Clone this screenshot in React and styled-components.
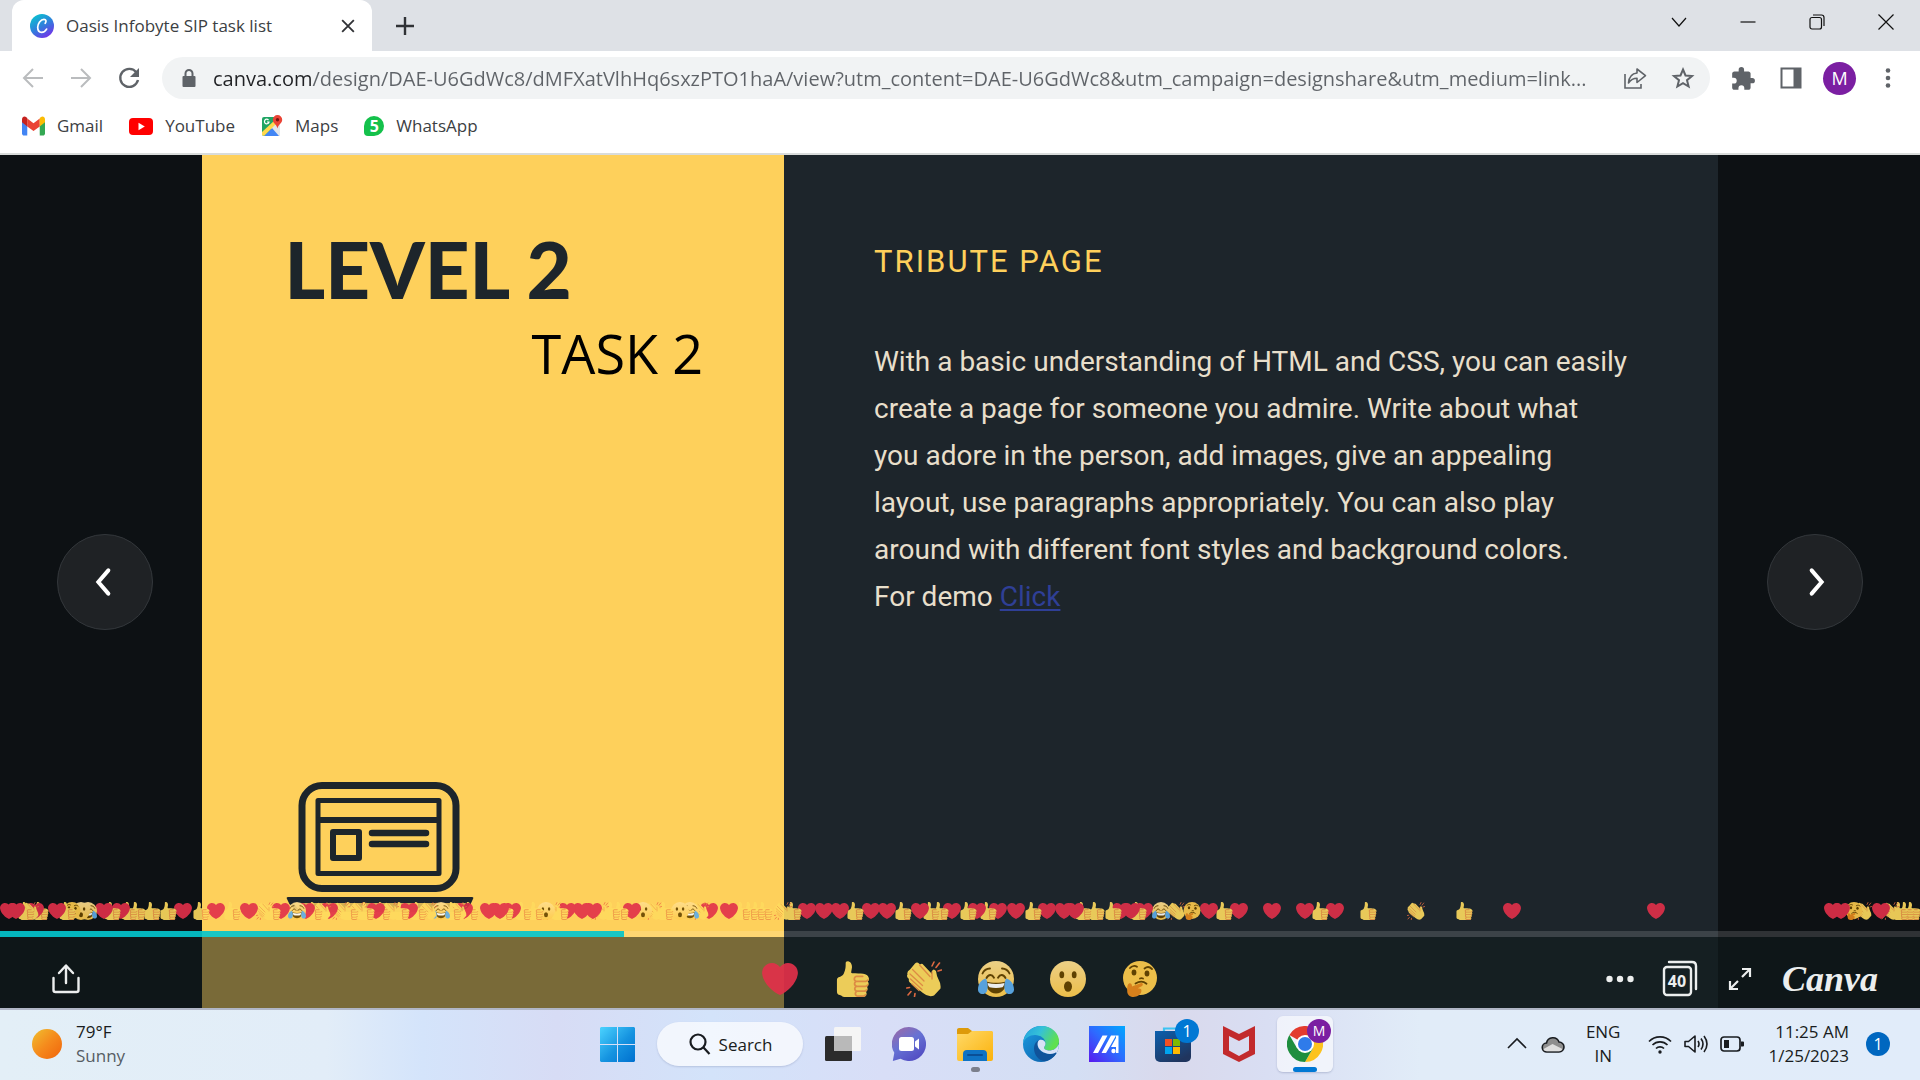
import React from "react";
import styled, { createGlobalStyle } from "styled-components";

const ui = `"Open Sans", "Noto Sans", sans-serif`;

const GlobalStyle = createGlobalStyle`
  *, *::before, *::after { box-sizing: border-box; }
  body { margin: 0; font-family: ${ui}; color: #3c4043; background: #0d1215; }
  button { font: inherit; color: inherit; border: 0; padding: 0; background: none; cursor: pointer; }
  svg { display: block; flex: none; }
`;

const Screen = styled.div`
  display: flex;
  flex-direction: column;
  height: 100vh;
  overflow: hidden;
`;

/* ---------- browser chrome ---------- */

const TabStrip = styled.header`
  display: flex;
  align-items: stretch;
  height: 51px;
  padding-left: 12px;
  background: #dee1e6;
`;

const Tab = styled.div`
  display: flex;
  align-items: center;
  width: 360px;
  padding: 0 12px 0 18px;
  gap: 12px;
  border-radius: 12px 12px 0 0;
  background: #fff;
  font-size: 17px;
  line-height: 24px;
`;

const TabTitle = styled.span`
  flex: 1;
  white-space: nowrap;
`;

const IconButton = styled.button`
  display: grid;
  place-items: center;
  flex: none;
  width: ${(p) => p.$w || 24}px;
  height: ${(p) => p.$h || 24}px;
`;

const NewTab = styled(IconButton)`
  align-self: center;
  margin-left: 17px;
`;

const WindowControls = styled.div`
  display: flex;
  align-items: center;
  height: 44px;
  margin-left: auto;
`;

const Toolbar = styled.nav`
  display: flex;
  align-items: center;
  height: 54px;
  padding: 0 18px 0 21px;
  background: #fff;
`;

const NavGroup = styled.div`
  display: flex;
  gap: 24px;
  margin-right: 21px;
`;

const Omnibox = styled.label`
  display: flex;
  align-items: center;
  flex: 1;
  min-width: 0;
  height: 42px;
  padding: 0 15px;
  border-radius: 21px;
  background: #f1f3f4;
`;

const Address = styled.input`
  flex: 1;
  min-width: 0;
  margin: 0 12px;
  padding: 2px 0 0;
  border: 0;
  outline: 0;
  font: 20px/28px ${ui};
  color: transparent;
  background: linear-gradient(90deg, #202124 98px, #5f6368 98px);
  background-clip: text;
  -webkit-background-clip: text;
`;

const OmniActions = styled.div`
  display: flex;
  gap: 24px;
`;

const ToolbarActions = styled.div`
  display: flex;
  align-items: center;
  gap: 20px;
  margin-left: 19px;
`;

const Avatar = styled.button`
  width: 33px;
  height: 33px;
  margin: 0 -2px;
  border-radius: 50%;
  background: #7b1fa2;
  color: #fff;
  font-size: 18px;
  line-height: 33px;
`;

const Bookmarks = styled.nav`
  display: flex;
  align-items: center;
  gap: 26px;
  height: 50px;
  padding: 0 22px 6px;
  border-bottom: 2px solid #d9dcdb;
  background: #fff;
`;

const Bookmark = styled.a`
  display: flex;
  align-items: center;
  gap: 12px;
  font-size: 17px;
  line-height: 24px;
  color: #3c4043;
  text-decoration: none;
`;

/* ---------- presentation ---------- */

const Stage = styled.main`
  position: relative;
  display: flex;
  justify-content: center;
  flex: 1;
  min-height: 0;
  background: #0d1114;
`;

const Slide = styled.article`
  display: flex;
  width: 79%;
  background: #1d252b;
`;

const TitlePanel = styled.section`
  display: flex;
  flex-direction: column;
  flex: none;
  width: 38.4%;
  padding: 68px 81px 96px 83px;
  background: #fed05b;
`;

const Level = styled.h1`
  margin: 0;
  font: 900 78px/92px Lato, sans-serif;
  color: #1d252b;
`;

const Task = styled.h2`
  margin: 0;
  font: 400 54px/76px "Open Sans", sans-serif;
  color: #000;
  text-align: right;
`;

const Laptop = styled.svg`
  margin-top: auto;
`;

const Brief = styled.section`
  flex: 1;
  padding: 84px 80px 0 90px;
`;

const BriefTitle = styled.h2`
  margin: 0 0 53px;
  font: 400 31px/46px Roboto, sans-serif;
  letter-spacing: 2px;
  color: #fed05b;
`;

const BriefText = styled.p`
  margin: 0;
  font: 400 28px/47px Roboto, sans-serif;
  color: #e8dfcb;
  white-space: nowrap;
`;

const DemoLink = styled.a`
  color: #2f3f96;
  text-decoration-thickness: 2px;
  text-underline-offset: 3px;
`;

const SlideArrow = styled.button`
  position: absolute;
  top: calc(50% - 48px);
  ${(p) => p.$side}: 57px;
  display: grid;
  place-items: center;
  width: 96px;
  height: 96px;
  border: 1px solid #33373b;
  border-radius: 50%;
  background: #1f2225;
`;

const Player = styled.footer`
  position: absolute;
  inset: auto 0 0;
`;

const Timeline = styled.div`
  position: relative;
  height: 18px;
  margin-bottom: 11px;
  opacity: 0.9;
  overflow: hidden;
`;

const Pin = styled.svg`
  position: absolute;
  top: 0;
  margin-left: -9px;
`;

const Track = styled.div`
  height: 6px;
  background: rgba(255, 255, 255, 0.14);
`;

const Played = styled.div`
  height: 6px;
  background: rgba(0, 196, 204, 0.9);
`;

const Controls = styled.div`
  display: grid;
  grid-template-columns: 1fr auto 1fr;
  align-items: center;
  height: 71px;
  padding: 12px 42px 0;
  background: rgba(16, 26, 29, 0.56);
`;

const Reactions = styled.div`
  display: flex;
  gap: 36px;
  opacity: 0.92;
`;

const PlayerTools = styled.div`
  display: flex;
  align-items: center;
  justify-content: flex-end;
`;

const PageCount = styled.button`
  position: relative;
  width: 36px;
  height: 46px;
  margin: 0 30px 0 28px;
  color: #eceeee;
`;

const CountText = styled.span`
  position: absolute;
  left: 1px;
  top: 10px;
  width: 28px;
  font: 700 16px/30px "Open Sans", sans-serif;
  text-align: center;
`;

const Brand = styled.a`
  margin-left: 30px;
  font: italic 700 36px/44px "Liberation Serif", serif;
  color: #eceeee;
  text-decoration: none;
`;

/* ---------- taskbar ---------- */

const Taskbar = styled.footer`
  display: grid;
  grid-template-columns: 1fr auto 1fr;
  align-items: center;
  height: 72px;
  padding: 0 30px 2px 32px;
  border-top: 2px solid #b0b6c6;
  background: linear-gradient(90deg, #e3eff7 0%, #e2edf8 17%, #d4e4fb 22%, #d7dcf5 29%, #d3e3fa 37%, #d8def7 46%, #d4dff4 56%, #d9d9ec 61%, #d9def3 66%, #e1ecf8 74%, #e1ecfa 100%);
  color: #191c20;
`;

const Weather = styled.button`
  display: flex;
  align-items: center;
  gap: 14px;
  justify-self: start;
  font-size: 17px;
  line-height: 24px;
  text-align: left;
`;

const Sun = styled.span`
  width: 30px;
  height: 30px;
  border-radius: 50%;
  background: linear-gradient(135deg, #f0c030, #f58a1c 50%, #f0640c);
`;

const Soft = styled.span`
  display: block;
  color: #565d64;
`;

const Apps = styled.div`
  display: flex;
  align-items: center;
  gap: 10px;
`;

const AppButton = styled.button`
  position: relative;
  display: grid;
  place-items: center;
  width: 56px;
  height: 56px;
  border-radius: 6px;
  background: ${(p) => (p.$active ? "rgba(255,255,255,.6)" : "none")};
  box-shadow: ${(p) => (p.$active ? "0 1px 2px rgba(60,70,120,.25)" : "none")};

  &::after {
    content: "";
    position: absolute;
    bottom: 0;
    width: ${(p) => (p.$active ? 24 : p.$open ? 9 : 0)}px;
    height: 5px;
    border-radius: 3px;
    background: ${(p) => (p.$active ? "#0078d4" : "#7b7f8c")};
  }
`;

const AppBadge = styled.span`
  position: absolute;
  top: 3px;
  right: 2px;
  width: 24px;
  height: 24px;
  border-radius: 50%;
  background: ${(p) => p.$color};
  color: #fff;
  font-size: ${(p) => p.$size}px;
  line-height: 24px;
  text-align: center;
`;

const Search = styled.button`
  display: flex;
  align-items: center;
  justify-content: center;
  gap: 7px;
  width: 146px;
  height: 44px;
  margin: 0 2px;
  border-radius: 22px;
  background: rgba(255, 255, 255, 0.7);
  box-shadow: 0 1px 2px rgba(60, 70, 120, 0.2);
  font-size: 17px;
`;

const Tray = styled.div`
  display: flex;
  align-items: center;
  justify-content: flex-end;
  gap: 12px;
  font-size: 17px;
  line-height: 24px;
`;

const Language = styled.button`
  margin: 0 16px 0 9px;
  text-align: center;
`;

const Clock = styled.button`
  margin: 0 5px 0 12px;
  text-align: right;
`;

const Line = styled.span`
  display: block;
`;

const Notices = styled.button`
  width: 24px;
  height: 24px;
  border-radius: 50%;
  background: #0067c0;
  color: #fff;
  font-size: 16px;
  line-height: 24px;
`;

/* ---------- reactions ---------- */

const Heart = () => (
  <path fill="#e2304a" d="M35.885 11.833c0-5.45-4.418-9.868-9.867-9.868-3.308 0-6.227 1.633-8.018 4.129-1.791-2.496-4.71-4.129-8.017-4.129-5.45 0-9.868 4.417-9.868 9.868 0 .772.098 1.52.266 2.241C1.751 22.587 11.216 31.568 18 34.034c6.783-2.466 16.249-11.447 17.617-19.959.17-.721.268-1.469.268-2.242z" />
);

const Thumb = () => (
  <>
    <path fill="#ffdb5e" d="M34.956 17.916c0-.503-.12-.975-.321-1.404-1.341-4.326-7.619-4.01-16.549-4.221-1.493-.035-.639-1.798-.115-5.668.341-2.517-1.282-6.382-4.01-6.382-4.498 0-.171 3.548-4.148 12.322-2.125 4.688-6.875 2.062-6.875 6.771v10.719c0 1.833.18 3.595 2.758 3.885C8.195 34.219 7.633 36 11.238 36h18.044c1.838 0 3.333-1.496 3.333-3.334 0-.762-.267-1.456-.698-2.018 1.02-.571 1.72-1.649 1.72-2.899 0-.76-.266-1.454-.696-2.015 1.023-.57 1.725-1.649 1.725-2.901 0-.909-.368-1.733-.961-2.336.757-.611 1.251-1.535 1.251-2.581z" />
    <path fill="#ee9547" d="M23.02 21.249h8.604c1.17 0 2.268-.626 2.866-1.633.246-.415.109-.952-.307-1.199-.415-.247-.952-.108-1.199.307-.283.479-.806.775-1.361.775h-8.81c-.873 0-1.583-.71-1.583-1.583s.71-1.583 1.583-1.583H28.7c.483 0 .875-.392.875-.875s-.392-.875-.875-.875h-5.888c-1.838 0-3.333 1.495-3.333 3.333 0 1.025.475 1.932 1.205 2.544-.615.605-.998 1.445-.998 2.373 0 1.028.478 1.938 1.212 2.549-.611.604-.99 1.441-.99 2.367 0 1.12.559 2.108 1.409 2.713-.524.589-.852 1.356-.852 2.204 0 1.838 1.495 3.333 3.333 3.333h5.484c1.17 0 2.269-.625 2.867-1.632.247-.415.11-.952-.305-1.199-.416-.245-.953-.11-1.199.305-.285.479-.808.776-1.363.776h-5.484c-.873 0-1.583-.71-1.583-1.583s.71-1.583 1.583-1.583h6.506c1.17 0 2.27-.626 2.867-1.633.247-.416.11-.953-.305-1.199-.419-.251-.954-.11-1.199.305-.289.487-.799.777-1.363.777h-7.063c-.873 0-1.583-.711-1.583-1.584s.71-1.583 1.583-1.583h8.091c1.17 0 2.269-.625 2.867-1.632.247-.415.11-.952-.305-1.199-.417-.246-.953-.11-1.199.305-.289.486-.799.776-1.363.776H23.02c-.873 0-1.583-.71-1.583-1.583s.71-1.584 1.583-1.584z" />
  </>
);

const Clap = () => (
  <>
    <path fill="#ffdb5e" d="M4 8.500 9 2.500q2-2 4 0l1 1q2-1.500 3.500.5L26 13v-3q1.500-3 4 0 .5 5 3 9.500 2 3 1.500 8L28 34.500q-5 2.500-11-2.500L5 22.500q-3-2-2-4.500-3-2-1.500-4.500-1-3 2.500-5z" />
    <path fill="none" stroke="#ee9547" strokeWidth="1.300" strokeLinecap="round" d="M6.500 8.500 18 20M4 13l12.500 11.500M4.500 18 16 28.500M13.500 4 24 15.500M6 23l7 6.500M26 11v7" />
    <path fill="none" stroke="#ee6f43" strokeWidth="1.600" strokeLinecap="round" d="m26 5 2-4M30 6.500 33.500 2M32 10l3.500-1M3.500 26.500.8 27M5 30.500 2 34M9 32.500 8.500 35.500" />
  </>
);

const Face = () => <circle cx="18" cy="18" r="18" fill="url(#skin)" />;

const Joy = () => (
  <>
    <Face />
    <path fill="none" stroke="#664500" strokeWidth="1.900" strokeLinecap="round" d="M4.500 12.500C6 9 8.500 7.600 12 7.500M31.500 12.500C30 9 27.500 7.600 24 7.500M8.500 17c2-4 5.500-4 7.500-.3M20 16.700c2-3.700 5.500-3.700 7.500.3" />
    <path fill="#664500" d="M8 20.500c6 1.700 14 1.700 20 0 .5 6-3.500 12-10 12s-10.500-6-10-12z" />
    <path fill="#fff" d="M9.500 22c5.500 1.200 11.500 1.200 17 0-.3 2-1 3.500-2 4.300-4 .8-9 .8-13 0-1-.8-1.700-2.300-2-4.300z" />
    <path fill="#5dadec" d="M8 17.500C3.500 18.500 0 23 0 28.500c0 5 7 6.500 9 1.500 1.400-3.700.6-8.500-1-12.500zM28 17.500c4.500 1 8 5.500 8 11 0 5-7 6.500-9 1.500-1.400-3.700-.6-8.500 1-12.500z" />
  </>
);

const Wow = () => (
  <>
    <Face />
    <g fill="#664500">
      <ellipse cx="18" cy="25.500" rx="4" ry="5.200" />
      <ellipse cx="11.800" cy="13.800" rx="2.400" ry="3.500" />
      <ellipse cx="24.200" cy="13.800" rx="2.400" ry="3.500" />
    </g>
  </>
);

const Think = () => (
  <>
    <circle cx="18" cy="17" r="17" fill="#ffcc4d" />
    <g fill="#664500">
      <ellipse cx="12" cy="11.500" rx="2.400" ry="3" />
      <ellipse cx="25" cy="12.500" rx="2.400" ry="3" />
    </g>
    <path fill="none" stroke="#664500" strokeWidth="1.800" strokeLinecap="round" d="M8 7c2-2.300 5-2.500 7-1.200M22.500 7.500c2.500-2 5.500-1.500 7.500.5M13.500 22.500c4-2.500 8-2.300 11 .2M18 17.500c1-.5 2-.5 3 0" />
    <path fill="#e8891c" d="M7 22.500c1.700-.7 3 .5 3 3l8.500-3.300c2.300-.7 3.300 2 1.200 3.100l-4 2c3 .2 4 1.200 3.700 2.500C19.500 33.500 15 36 11.500 36 7.500 36 5 33.500 5.200 29.500c.1-2.500-.2-6 1.800-7z" />
  </>
);

const shapes = { h: Heart, t: Thumb, c: Clap, j: Joy, w: Wow, k: Think };

const reactionButtons = [
  ["h", "Love"],
  ["t", "Thumbs up"],
  ["c", "Applause"],
  ["j", "Funny"],
  ["w", "Surprised"],
  ["k", "Thinking"],
];

/* each entry: kind of reaction and its moment on a 1920-unit timeline; earlier ones lie on top */
const pins =
  "h9 h16 t26 c30 h35 t40 h57 t67 k72 w81 j88 h104 t112 h121 t129 t137 t152 t168 h183 t201 h216 t232 h249 c265 t272 h281 j297 h306 t314 c322 h329 c341 t350 c358 t366 h376 t382 c390 t401 h409 t418 c428 j441 t453 c458 h464 t470 h489 h500 t505 h512 t523 t535 w546 c552 t560 h567 h582 h593 c600 t612 t620 h632 w643 c653 t665 w680 j690 c700 h709 h729 t742 t750 t757 t764 c783 t793 h807 h824 h840 t855 h871 h887 t903 h920 t931 t940 h952 t968 h977 t988 h998 h1016 t1033 h1047 h1064 h1075 t1083 t1096 t1113 h1121 h1131 t1138 h1144 j1161 c1176 k1192 h1209 t1224 h1239 h1272 h1305 t1320 h1335 t1368 c1416 t1464 h1512 h1656 h1833 h1841 k1854 c1863 h1881 c1890 t1900 t1906 t1912"
    .split(" ")
    .map((s) => ({ kind: s[0], at: Number(s.slice(1)) }))
    .reverse();

/* ---------- icons ---------- */

const Stroke = ({ size = 24, w = 2, color = "#5f6368", children, cap = "butt" }) => (
  <svg width={size} height={size} viewBox="0 0 24 24" fill="none" stroke={color} strokeWidth={w} strokeLinecap={cap} aria-hidden="true">
    {children}
  </svg>
);

const CanvaFavicon = () => (
  <svg width="24" height="24" viewBox="0 0 24 24" aria-hidden="true">
    <circle cx="12" cy="12" r="12" fill="url(#canva)" />
    <path fill="none" stroke="#fff" strokeWidth="1.700" strokeLinecap="round" d="M15.200 9.300c1.500-2 .8-4-1.200-4-3.400 0-6.300 4.300-6.300 8 0 3 1.600 5 3.900 5 2.200 0 4-1.400 5-3.200" />
  </svg>
);

const GmailIcon = () => (
  <svg width="23" height="20" viewBox="0 0 24 20" aria-hidden="true">
    <path fill="#4285f4" d="M0 5v12.500C0 19 1 20 2.200 20H5.500V8z" />
    <path fill="#34a853" d="M24 5v12.500c0 1.500-1 2.500-2.200 2.500H18.500V8z" />
    <path fill="#ea4335" d="M5.500 10.500V2.200L12 7l6.500-4.800v8.300L12 15.300z" />
    <path fill="#c5221f" d="M0 6V3C0 .3 2.700-.800 4.500.800l1 .9v8.700z" />
    <path fill="#fbbc04" d="M24 6V3c0-2.700-2.700-3.800-4.500-2.200l-1 .9v8.700z" />
  </svg>
);

const YouTubeIcon = () => (
  <svg width="24" height="17" viewBox="0 0 24 17" aria-hidden="true">
    <rect width="24" height="17" rx="4" fill="#f00" />
    <path fill="#fff" d="m9.500 4.800 6.300 3.700-6.300 3.700z" />
  </svg>
);

const MapsIcon = () => (
  <svg width="22" height="22" viewBox="0 0 22 22" aria-hidden="true">
    <rect x="1" y="2" width="18" height="19" rx="2" fill="#1fa463" />
    <path fill="#e3e6ea" d="m10 12 9-6v15H10z" />
    <path fill="#4285f4" d="m3 21 8-8 7 8z" />
    <path fill="#ffd84d" d="M1 17v3l2 1L17 7l-3-2z" />
    <path fill="#ea4335" d="M16.500 0a4.700 4.700 0 0 0-4.700 4.700c0 3.600 3.700 4.300 4.700 8.800 1-4.500 4.700-5.200 4.700-8.800A4.700 4.700 0 0 0 16.500 0z" />
    <circle cx="16.500" cy="4.700" r="1.700" fill="#7b1410" />
    <path fill="none" stroke="#fff" strokeWidth="1.200" d="M7.500 5a2.300 2.300 0 1 0 .5 2H6" />
  </svg>
);

const ChatBadge = styled.span`
  width: 20px;
  height: 20px;
  border-radius: 50% 50% 50% 4px;
  background: #14c14b;
  color: #fff;
  font-size: 16px;
  font-weight: 700;
  line-height: 20px;
  text-align: center;
`;

const WindowsLogo = () => (
  <svg width="35" height="35" viewBox="0 0 35 35" fill="url(#win)" aria-hidden="true">
    <path d="M1 0h16v17H0V1zM18 0h16l1 1v16H18zM0 18h17v17H1l-1-1zM18 18h17v16l-1 1H18z" />
  </svg>
);

const TaskView = () => (
  <svg width="36" height="34" viewBox="0 0 36 34" aria-hidden="true">
    <rect y="9" width="27" height="25" rx="1.500" fill="#2b2b2b" />
    <rect x="9" width="27" height="24" rx="1.500" fill="#f5f5f5" />
    <path fill="#b9b9b9" d="M9 9h18v15H9z" />
  </svg>
);

const Chat = () => (
  <svg width="34" height="34" viewBox="0 0 34 34" aria-hidden="true">
    <path fill="url(#chat)" d="M17 0a17 17 0 1 1-8.500 31.700L.8 34l1.500-8.300A17 17 0 0 1 17 0z" />
    <rect x="7" y="10" width="15" height="14" rx="2.500" fill="#fff" />
    <path fill="#fff" d="m23 14.500 4-3v11l-4-3z" />
  </svg>
);

const Folder = () => (
  <svg width="36" height="33" viewBox="0 0 36 33" aria-hidden="true">
    <path fill="#dd9a0a" d="M0 2C0 .9.900 0 2 0h9l4 3h20v8H0z" />
    <path fill="url(#folder)" d="M0 6h11l4-3h20l1 1v27a2 2 0 0 1-2 2H2a2 2 0 0 1-2-2z" />
    <path fill="#0f73c4" d="M6 33v-7a4 4 0 0 1 4-4h16a4 4 0 0 1 4 4v7z" />
    <path stroke="#0a4f96" strokeWidth="2" strokeLinecap="round" d="M11 27h14" />
  </svg>
);

const Edge = () => (
  <svg width="36" height="36" viewBox="0 0 36 36" aria-hidden="true">
    <circle cx="18" cy="18" r="18" fill="url(#edgeBlue)" />
    <path fill="url(#edgeTop)" d="M0 17C1 7 9 0 18.500 0 29 0 36 7.500 36 15c0 6-4.500 9.500-9.500 9.500-3.500 0-5.500-1.500-5.500-2.800 0-1 1.500-1.700 1.500-4.200C22.500 12.500 17.500 9 12 9 6.500 9 2 12 0 17z" />
    <path fill="#10539a" d="M17 13.500c-4 1.500-6 5-6 9C11 29 16 35.500 23 35c5-1.500 8.500-4.500 10.300-7.800.3-.700-.3-1-.900-.700C25 30.500 14.500 25.500 14.500 18.500c0-2 1-4 2.500-5z" />
    <path fill="#d9e2f7" d="M16 14.300c2.500-1.300 6.500.2 6.500 3.300 0 2.400-1.500 3-1.500 4.200 0 1.500 2.500 2.800 5.500 2.800 3.500 0 7.500-2 9.200-6.500.5 3-.4 6.700-2.400 9.200-.3-.9-.5-.8-1.300-.4C24 30.300 14.600 24.700 14.600 18.300c0-1.800.5-3.300 1.400-4z" />
  </svg>
);

const MyAsus = () => (
  <svg width="36" height="36" viewBox="0 0 36 36" aria-hidden="true">
    <path fill="url(#asus)" d="M0 0h36v36H0z" />
    <path fill="#fff" d="M4 27 13.500 9.500h5L9 27zM12.500 27 22 9.500h5L17 27zM27 9.500h2.500V27H27zM22 21l5-9v9z" />
    <circle cx="24.500" cy="25" r="2.200" fill="#fff" />
  </svg>
);

const Store = () => (
  <svg width="36" height="36" viewBox="0 0 36 36" aria-hidden="true">
    <path fill="none" stroke="#3cc3f2" strokeWidth="2.200" d="M9 8V2.500h18V8" />
    <path fill="url(#store)" d="M0 5h36v26a5 5 0 0 1-5 5H5a5 5 0 0 1-5-5z" />
    <path fill="#f25022" d="M10 13h7v7h-7z" />
    <path fill="#7fba00" d="M18 13h7v7h-7z" />
    <path fill="#00a4ef" d="M10 21h7v7h-7z" />
    <path fill="#ffb900" d="M18 21h7v7h-7z" />
  </svg>
);

const McAfee = () => (
  <svg width="32" height="36" viewBox="0 0 32 36" aria-hidden="true">
    <path fill="#c22a2c" fillRule="evenodd" d="M0 0 16 8 32 0v28l-16 8-16-8zM6 10v14.500l10 5.500 10-5.500V10l-10 5z" />
  </svg>
);

const Chrome = () => (
  <svg width="36" height="36" viewBox="0 0 36 36" aria-hidden="true">
    <path fill="#e33b2e" d="M18 18 2.400 9A18 18 0 0 1 33.600 9z" />
    <path fill="#fcc31e" d="M18 9h15.600A18 18 0 0 1 18 36l7.800-13.500z" />
    <path fill="#1e8e3e" d="M2.400 9A18 18 0 0 0 18 36l7.800-13.500L18 18l-7.800 4.500z" />
    <circle cx="18" cy="18" r="9" fill="#fff" />
    <circle cx="18" cy="18" r="7" fill="#2f7bea" />
  </svg>
);

const GradientDefs = styled.svg`
  position: absolute;
`;

const Gradients = () => (
  <GradientDefs width="0" height="0" aria-hidden="true">
    <defs>
      <linearGradient id="skin" x2="0" y2="1"><stop stopColor="#ffdf90" /><stop offset="1" stopColor="#ffcc4d" /></linearGradient>
      <linearGradient id="canva" x1=".2" x2=".8" y2="1"><stop stopColor="#08c5cf" /><stop offset=".5" stopColor="#2f7fdc" /><stop offset="1" stopColor="#7a2bea" /></linearGradient>
      <linearGradient id="win" x2="1" y2="1"><stop stopColor="#4bd3ff" /><stop offset=".55" stopColor="#1593e0" /><stop offset="1" stopColor="#0070cf" /></linearGradient>
      <linearGradient id="chat" x1="0" y1=".1" x2=".6" y2="1"><stop stopColor="#9a6aa8" /><stop offset=".5" stopColor="#6672d4" /><stop offset="1" stopColor="#5450c4" /></linearGradient>
      <linearGradient id="folder" x2="1" y2="1"><stop stopColor="#ffd968" /><stop offset="1" stopColor="#fbb20c" /></linearGradient>
      <linearGradient id="edgeBlue" x2="1" y2="1"><stop stopColor="#1b9de2" /><stop offset="1" stopColor="#0c59a4" /></linearGradient>
      <linearGradient id="edgeTop" x2="1" y2=".4"><stop stopColor="#219fdf" /><stop offset=".5" stopColor="#35c1d8" /><stop offset="1" stopColor="#5fe04f" /></linearGradient>
      <linearGradient id="asus" x1="1" x2="0" y2="1"><stop stopColor="#00a8ff" /><stop offset=".5" stopColor="#2d6bff" /><stop offset="1" stopColor="#5a18ee" /></linearGradient>
      <linearGradient id="store" x2=".6" y2="1"><stop stopColor="#0b5fae" /><stop offset="1" stopColor="#20355e" /></linearGradient>
    </defs>
  </GradientDefs>
);

const apps = [
  { name: "Task view", icon: TaskView },
  { name: "Chat", icon: Chat },
  { name: "File Explorer", icon: Folder, open: true },
  { name: "Microsoft Edge", icon: Edge },
  { name: "MyASUS", icon: MyAsus },
  { name: "Microsoft Store", icon: Store, badge: "1", color: "#0078d4", size: 16 },
  { name: "McAfee", icon: McAfee },
  { name: "Google Chrome", icon: Chrome, active: true, badge: "M", color: "#7b1fa2", size: 14 },
];

const bookmarks = [
  { name: "Gmail", icon: <GmailIcon /> },
  { name: "YouTube", icon: <YouTubeIcon /> },
  { name: "Maps", icon: <MapsIcon /> },
  { name: "WhatsApp", icon: <ChatBadge>5</ChatBadge> },
];

const url =
  "canva.com/design/DAE-U6GdWc8/dMFXatVlhHq6sxzPTO1haA/view?utm_content=DAE-U6GdWc8&utm_campaign=designshare&utm_medium=link...";

const BrowserBar = () => (
  <>
    <TabStrip>
      <Tab>
        <CanvaFavicon />
        <TabTitle>Oasis Infobyte SIP task list</TabTitle>
        <IconButton aria-label="Close tab">
          <Stroke size={20} color="#303236" w={2.2}><path d="M5 5l14 14M19 5 5 19" /></Stroke>
        </IconButton>
      </Tab>
      <NewTab $w={32} $h={32} aria-label="New tab">
        <Stroke color="#303236" w={2.4}><path d="M12 3v18M3 12h18" /></Stroke>
      </NewTab>
      <WindowControls>
        <IconButton $w={68} aria-label="Search tabs"><Stroke w={1.2} color="#111"><path d="m5 8 7 8 7-8" /></Stroke></IconButton>
        <IconButton $w={69} aria-label="Minimize"><Stroke w={1.2} color="#111"><path d="M4.500 12h15" /></Stroke></IconButton>
        <IconButton $w={69} aria-label="Restore"><Stroke w={1.2} color="#111"><rect x="5" y="7.500" width="11.500" height="11.500" rx="2" /><path d="M8 5h8.500A2.500 2.500 0 0 1 19 7.500V16" /></Stroke></IconButton>
        <IconButton $w={69} aria-label="Close"><Stroke w={1.2} color="#111"><path d="M4.500 4.500l15 15M19.500 4.500l-15 15" /></Stroke></IconButton>
      </WindowControls>
    </TabStrip>
    <Toolbar>
      <NavGroup>
        <IconButton aria-label="Back"><Stroke color="#babcbe"><path d="M22 12H4M12 3l-9 9 9 9" /></Stroke></IconButton>
        <IconButton aria-label="Forward"><Stroke color="#babcbe"><path d="M2 12h18M12 3l9 9-9 9" /></Stroke></IconButton>
        <IconButton aria-label="Reload">
          <Stroke w={2.4}><path d="M19.500 6.500A9 9 0 1 0 21 14" /><path d="M22 2v9h-9z" fill="#5f6368" stroke="none" /></Stroke>
        </IconButton>
      </NavGroup>
      <Omnibox>
        <Stroke size={24}><rect x="5.500" y="10" width="13" height="11" rx="1" fill="#5f6368" stroke="none" /><path d="M8.500 10.500V7.500a3.500 3.500 0 0 1 7 0v3" /></Stroke>
        <Address aria-label="Address" defaultValue={url} spellCheck={false} />
        <OmniActions>
          <IconButton aria-label="Share">
            <Stroke w={1.6}><path d="M2 8v14h16v-4" /><path d="M14 3v4c-5 .5-8 4-8.500 10C8 13.500 10.500 12.300 14 12.300V16.500L22.500 9.700z" strokeLinejoin="round" /></Stroke>
          </IconButton>
          <IconButton aria-label="Bookmark this tab">
            <Stroke w={2}><path d="m12 3.500 2.500 6 6.500.5-5 4.200 1.600 6.300L12 17.100l-5.600 3.400L8 14.200 3 10l6.500-.5z" /></Stroke>
          </IconButton>
        </OmniActions>
      </Omnibox>
      <ToolbarActions>
        <IconButton $w={28} aria-label="Extensions">
          <Stroke size={26}><path stroke="none" fill="#5f6368" d="M20.500 11H19V7c0-1.100-.9-2-2-2h-4V3.500a2.500 2.500 0 0 0-5 0V5H4c-1.100 0-2 .9-2 2v3.800h1.500a2.700 2.700 0 0 1 0 5.400H2V20c0 1.100.9 2 2 2h3.800v-1.500a2.700 2.700 0 0 1 5.400 0V22H17c1.100 0 2-.9 2-2v-4h1.500a2.500 2.500 0 0 0 0-5z" /></Stroke>
        </IconButton>
        <IconButton $w={28} aria-label="Side panel">
          <Stroke><path d="M2.500 2.500h19v19h-19z" /><path fill="#5f6368" stroke="none" d="M14.500 2H22v20h-7.500z" /></Stroke>
        </IconButton>
        <Avatar aria-label="Profile M">M</Avatar>
        <IconButton $w={28} aria-label="Menu">
          <Stroke><g fill="#5f6368" stroke="none"><circle cx="12" cy="4.500" r="2.300" /><circle cx="12" cy="12" r="2.300" /><circle cx="12" cy="19.500" r="2.300" /></g></Stroke>
        </IconButton>
      </ToolbarActions>
    </Toolbar>
    <Bookmarks>
      {bookmarks.map((b) => (
        <Bookmark href="#" key={b.name}>{b.icon}{b.name}</Bookmark>
      ))}
    </Bookmarks>
  </>
);

const Presentation = () => (
  <Stage>
    <Slide>
      <TitlePanel>
        <Level>LEVEL 2</Level>
        <Task>TASK 2</Task>
        <Laptop width="190" height="130" viewBox="0 0 190 130" fill="none" stroke="#1d252b" strokeLinecap="round" strokeLinejoin="round" aria-hidden="true">
          <rect x="17" y="3.500" width="154" height="103" rx="20" strokeWidth="7" />
          <rect x="33" y="18.500" width="121" height="73" strokeWidth="5" />
          <path strokeWidth="6" d="M34 38h119" />
          <rect x="48" y="50" width="26" height="26" strokeWidth="6" />
          <path strokeWidth="6.500" d="M87 51h54M87 62h54" />
          <path fill="#1d252b" stroke="none" d="M3 115h184q2 0 1 2-4 12-16 13H19Q6 129 2 117q-1-2 1-2z" />
          <path fill="#fed05b" stroke="none" opacity=".82" d="M9 121h172q-5 9-12 9H21q-8 0-12-9z" />
        </Laptop>
      </TitlePanel>
      <Brief>
        <BriefTitle>TRIBUTE PAGE</BriefTitle>
        <BriefText>
          With a basic understanding of HTML and CSS, you can easily<br />
          create a page for someone you admire. Write about what<br />
          you adore in the person, add images, give an appealing<br />
          layout, use paragraphs appropriately. You can also play<br />
          around with different font styles and background colors.<br />
          For demo <DemoLink href="#">Click</DemoLink>
        </BriefText>
      </Brief>
    </Slide>
    <SlideArrow $side="left" aria-label="Previous slide">
      <Stroke size={40} color="#fff" w={2.4} cap="round"><path d="m14 5-6 7 6 7" /></Stroke>
    </SlideArrow>
    <SlideArrow $side="right" aria-label="Next slide">
      <Stroke size={40} color="#fff" w={2.4} cap="round"><path d="m10 5 6 7-6 7" /></Stroke>
    </SlideArrow>
    <Player>
      <Timeline>
        {pins.map(({ kind, at }) => {
          const Shape = shapes[kind];
          return (
            <Pin key={kind + at} width="18" height="18" viewBox="0 0 36 36" style={{ left: `${(at / 1920) * 100}%` }} aria-hidden="true">
              <Shape />
            </Pin>
          );
        })}
      </Timeline>
      <Track><Played style={{ width: `${(13 / 40) * 100}%` }} /></Track>
      <Controls>
        <IconButton $w={48} $h={40} aria-label="Share">
          <svg width="36" height="36" viewBox="0 0 36 36" fill="none" stroke="#eceeee" strokeWidth="2.400" strokeLinecap="round" strokeLinejoin="round"><path d="M5.500 17v12q0 2 2 2h21q2 0 2-2V17M18 22V5M11 12l7-7.500L25 12" /></svg>
        </IconButton>
        <Reactions>
          {reactionButtons.map(([kind, label]) => {
            const Shape = shapes[kind];
            return (
              <IconButton key={kind} $w={36} $h={36} aria-label={label}>
                <svg width="36" height="36" viewBox="0 0 36 36"><Shape /></svg>
              </IconButton>
            );
          })}
        </Reactions>
        <PlayerTools>
          <IconButton $w={28} aria-label="More">
            <svg width="28" height="8" viewBox="0 0 28 8" fill="#eceeee"><circle cx="3.500" cy="4" r="3.200" /><circle cx="14" cy="4" r="3.200" /><circle cx="24.500" cy="4" r="3.200" /></svg>
          </IconButton>
          <PageCount>
            <svg width="36" height="46" viewBox="0 0 36 46" fill="none" stroke="#eceeee" strokeWidth="2.400" strokeLinecap="round"><rect x="2" y="11" width="27" height="28" rx="3" /><path d="M7 6h23q4 0 4 4v23" /></svg>
            <CountText>40</CountText>
          </PageCount>
          <IconButton aria-label="Full screen">
            <Stroke w={2.2} color="#eceeee"><path d="M14 2h8v8M22 2l-8 8M2 14v8h8M2 22l8-8" /></Stroke>
          </IconButton>
          <Brand href="#">Canva</Brand>
        </PlayerTools>
      </Controls>
    </Player>
  </Stage>
);

const WindowsTaskbar = () => (
  <Taskbar>
    <Weather>
      <Sun />
      <span>79°F<Soft>Sunny</Soft></span>
    </Weather>
    <Apps>
      <AppButton aria-label="Start"><WindowsLogo /></AppButton>
      <Search>
        <Stroke color="#191c20" w={2.2}><circle cx="10" cy="10" r="7.500" /><path d="m15.500 15.500 6 6.500" /></Stroke>
        Search
      </Search>
      {apps.map(({ name, icon: Icon, open, active, badge, color, size }) => (
        <AppButton key={name} aria-label={name} $open={open} $active={active}>
          <Icon />
          {badge && <AppBadge $color={color} $size={size}>{badge}</AppBadge>}
        </AppButton>
      ))}
    </Apps>
    <Tray>
      <IconButton aria-label="Hidden icons"><Stroke color="#191c20" w={1.6}><path d="m3 16 9-9 9 9" /></Stroke></IconButton>
      <IconButton aria-label="OneDrive">
        <Stroke color="#191c20" w={1.6}><path fill="#8e8e8e" d="M6 20a4.500 4.500 0 0 1-.5-9A6.500 6.500 0 0 1 18 10a5 5 0 0 1 0 10z" /><path fill="#dedede" stroke="none" d="m2.500 17 9-5 10 5c-.8 1.500-2 2.200-3.500 2.200H6C4.300 19.200 3 18.500 2.500 17z" /></Stroke>
      </IconButton>
      <Language><Line>ENG</Line><Line>IN</Line></Language>
      <IconButton aria-label="Network">
        <Stroke color="#191c20" w={1.7}><path d="M1 9.500a15.500 15.500 0 0 1 22 0M4.500 13a10.600 10.600 0 0 1 15 0M8 16.500a5.700 5.700 0 0 1 8 0" /><circle cx="12" cy="20" r="1.700" fill="#191c20" stroke="none" /></Stroke>
      </IconButton>
      <IconButton aria-label="Volume">
        <Stroke color="#191c20" w={1.6}><path strokeLinejoin="round" d="M1 9.500v5h3.500L11 20V4L4.500 9.500z" /><path d="M14 9q2 3 0 6M17 6.500q4 5.500 0 11M20 4q6 8 0 16" /></Stroke>
      </IconButton>
      <IconButton aria-label="Battery">
        <Stroke color="#191c20" w={1.7}><rect x="1" y="5" width="19" height="14" rx="3" /><path fill="#191c20" stroke="none" d="M4 8h5v8H4zM21 9.500h2a1 1 0 0 1 1 1v3a1 1 0 0 1-1 1h-2z" /></Stroke>
      </IconButton>
      <Clock><Line>11:25 AM</Line><Line>1/25/2023</Line></Clock>
      <Notices aria-label="1 notification">1</Notices>
    </Tray>
  </Taskbar>
);

export default function App() {
  return (
    <Screen>
      <GlobalStyle />
      <Gradients />
      <BrowserBar />
      <Presentation />
      <WindowsTaskbar />
    </Screen>
  );
}
